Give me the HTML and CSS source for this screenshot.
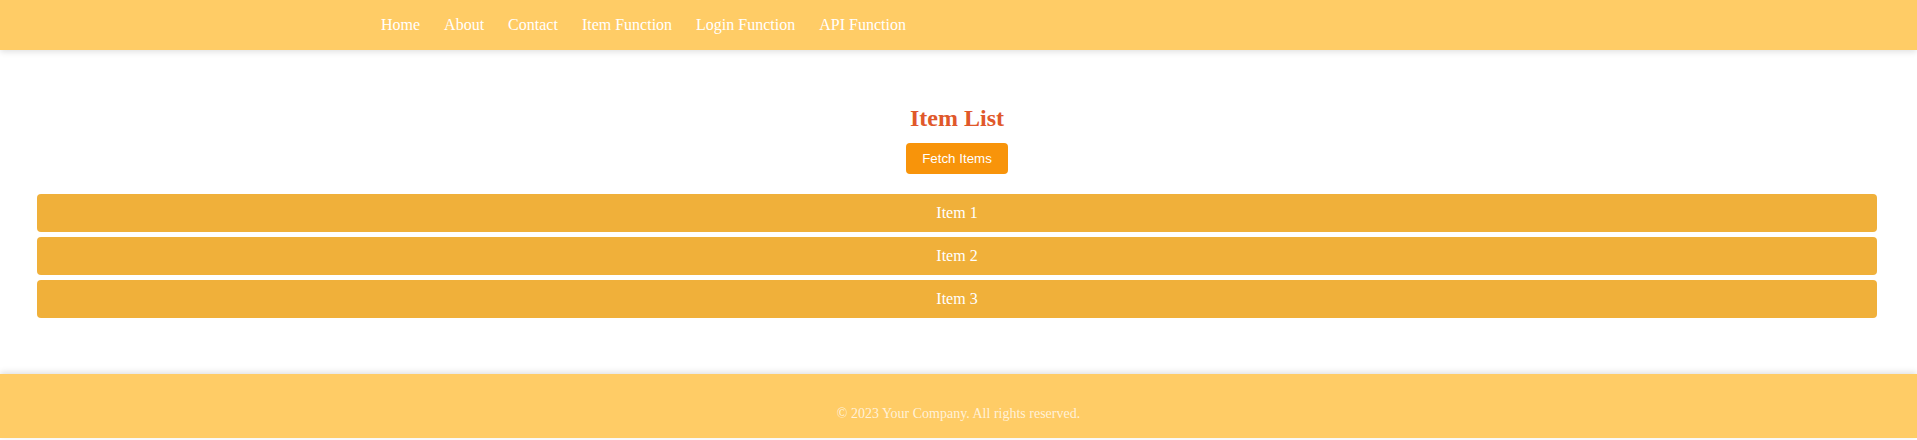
FILE: index.html
```html
<!DOCTYPE html>
<html lang="en">
<head>
<meta charset="utf-8">
<title>Item List</title>
<link rel="stylesheet" href="styles.css">
</head>
<body>
<header class="site-header">
  <nav class="nav">
    <a href="#">Home</a>
    <a href="#">About</a>
    <a href="#">Contact</a>
    <a href="#">Item Function</a>
    <a href="#">Login Function</a>
    <a href="#">API Function</a>
  </nav>
</header>
<main class="main">
  <h2 class="title">Item List</h2>
  <button class="fetch-btn">Fetch Items</button>
  <ul class="item-list">
    <li class="item">Item 1</li>
    <li class="item">Item 2</li>
    <li class="item">Item 3</li>
  </ul>
</main>
<footer class="site-footer">
  <p>© 2023 Your Company. All rights reserved.</p>
</footer>
</body>
</html>
```

FILE: styles.css
```css
* { box-sizing: border-box; }

body {
  margin: 0;
  font-family: "Liberation Serif", "Times New Roman", serif;
  background: #fff;
}

.site-header {
  height: 50px;
  background: #ffcc66;
  box-shadow: 0 2px 6px rgba(0, 0, 0, 0.12);
  display: flex;
  align-items: center;
  position: relative;
  z-index: 1;
}

.nav {
  display: flex;
  gap: 24px;
  padding-left: 381px;
}

.nav a {
  color: #fff;
  text-decoration: none;
  font-size: 16px;
}

.main {
  padding: 55px 40px 56px 37px;
  display: flex;
  flex-direction: column;
  align-items: center;
}

.title {
  margin: 0;
  font-size: 24px;
  font-weight: bold;
  color: #e0582a;
}

.fetch-btn {
  margin-top: 11px;
  background: #f8940a;
  color: #fff;
  border: none;
  border-radius: 4px;
  padding: 8px 16px;
  font-family: "Liberation Sans", Arial, sans-serif;
  font-size: 13.33px;
}

.item-list {
  list-style: none;
  margin: 20px 0 0;
  padding: 0;
  width: 100%;
  display: flex;
  flex-direction: column;
  gap: 5px;
}

.item {
  background: #f0b03a;
  color: #fff;
  border-radius: 4px;
  height: 38px;
  display: flex;
  align-items: center;
  justify-content: center;
  font-size: 16px;
}

.site-footer {
  height: 64px;
  margin-bottom: 2px;
  background: #ffcc66;
  box-shadow: 0 -2px 6px rgba(0, 0, 0, 0.12);
  padding-top: 32px;
  text-align: center;
}

.site-footer p {
  margin: 0;
  font-size: 14px;
  color: rgba(255, 255, 255, 0.75);
}
```
